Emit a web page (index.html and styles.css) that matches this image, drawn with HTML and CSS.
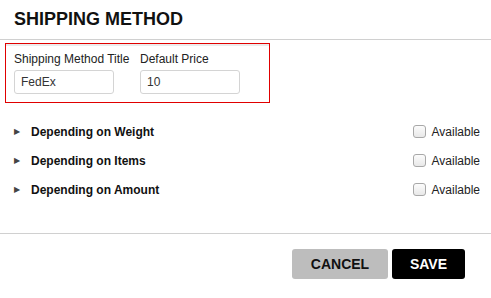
FILE: index.html
```html
<!DOCTYPE html>
<html>

<head>
    <title>Shipping Method</title>
    <link rel="stylesheet" href="styles.css">
</head>

<body>

    <div class="dialog">
        <h2 class="dialog-title">SHIPPING METHOD</h2>

        <div class="dialog-body">
            <div class="method-box">
                <div class="field field-title">
                    <label>Shipping Method Title</label>
                    <input type="text" value="FedEx">
                </div>
                <div class="field field-price">
                    <label>Default Price</label>
                    <input type="text" value="10">
                </div>
            </div>

            <div class="rule-list">
                <div class="rule">
                    <span class="arrow">&#9654;</span>
                    <span class="rule-name">Depending on Weight</span>
                    <label class="avail"><input type="checkbox"> Available</label>
                </div>
                <div class="rule">
                    <span class="arrow">&#9654;</span>
                    <span class="rule-name">Depending on Items</span>
                    <label class="avail"><input type="checkbox"> Available</label>
                </div>
                <div class="rule">
                    <span class="arrow">&#9654;</span>
                    <span class="rule-name">Depending on Amount</span>
                    <label class="avail"><input type="checkbox"> Available</label>
                </div>
            </div>
        </div>

        <div class="dialog-footer">
            <button class="btn btn-cancel">CANCEL</button>
            <button class="btn btn-save">SAVE</button>
        </div>
    </div>

</body>

</html>
```

FILE: styles.css
```css
body {
    margin: 0;
    font-family: 'Liberation Sans', Arial, sans-serif;
    background-color: #fff;
    color: #111;
}

.dialog {
    width: 491px;
}

.dialog-title {
    margin: 0;
    height: 40px;
    box-sizing: border-box;
    padding: 9px 14px 0;
    font-size: 18px;
    line-height: 21px;
    font-weight: bold;
    color: #111;
    border-bottom: 1px solid #d0d0d0;
}

.dialog-body {
    padding: 3px 0 0 5px;
}

/* Title + price box */
.method-box {
    width: 265px;
    height: 60px;
    box-sizing: border-box;
    border: 1px solid #e00000;
    box-shadow: inset 0 2px 0 #ececec;
    display: flex;
    gap: 26px;
    padding: 8px 0 0 8px;
}

.field {
    width: 100px;
}

.field label {
    display: block;
    white-space: nowrap;
    font-size: 12px;
    line-height: 14px;
    color: #222;
    margin-bottom: 4px;
}

.field input {
    box-sizing: border-box;
    width: 100px;
    height: 24px;
    padding: 0 6px;
    font-family: 'Liberation Sans', Arial, sans-serif;
    font-size: 12px;
    color: #333;
    border: 1px solid #d4d4d4;
    border-radius: 3px;
    outline: none;
}

/* Rule rows */
.rule-list {
    padding-top: 14px;
}

.rule {
    display: flex;
    align-items: center;
    height: 29px;
    padding-left: 9px;
    padding-right: 11px;
}

.arrow {
    font-size: 8px;
    color: #444;
    width: 17px;
}

.rule-name {
    flex: 1;
    font-size: 12px;
    font-weight: bold;
    color: #111;
}

.avail {
    display: flex;
    align-items: center;
    font-size: 12px;
    color: #222;
}

.avail input {
    appearance: none;
    -webkit-appearance: none;
    box-sizing: border-box;
    width: 13px;
    height: 13px;
    margin: 0 6px 0 0;
    border: 1px solid #a8a8a8;
    border-radius: 3px;
    background: linear-gradient(#fcfcfc, #e8e8e8);
}

/* Footer */
.dialog-footer {
    margin-top: 29px;
    border-top: 1px solid #d0d0d0;
    display: flex;
    justify-content: flex-end;
    gap: 4px;
    padding: 15px 26px 0 0;
}

.btn {
    height: 30px;
    border: none;
    border-radius: 3px;
    font-family: 'Liberation Sans', Arial, sans-serif;
    font-size: 14px;
    font-weight: bold;
    cursor: pointer;
}

.btn-cancel {
    width: 96px;
    background-color: #bdbdbd;
    color: #111;
}

.btn-save {
    width: 73px;
    background-color: #000;
    color: #fff;
}
```
